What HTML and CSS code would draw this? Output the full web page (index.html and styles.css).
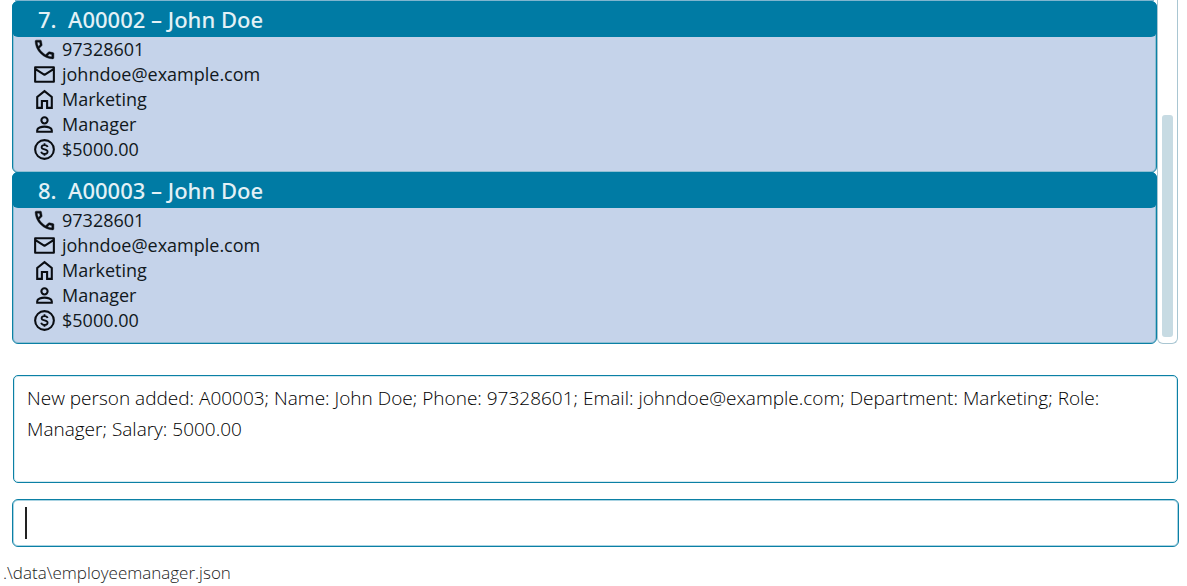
FILE: index.html
```html
<!DOCTYPE html>
<html lang="en">
<head>
<meta charset="utf-8">
<title>Employee Manager</title>
<link rel="stylesheet" href="styles.css">
</head>
<body>
<svg class="sprite" aria-hidden="true">
  <symbol id="i-phone" viewBox="0 0 24 24"><path d="M19.950 21q-3.125 0-6.175-1.362t-5.550-3.863-3.862-5.550T3 4.050q0-.45.3-.75t.75-.3H8.100q.35 0 .625.238t.325.562l.65 3.500q.05.4-.025.675T9.400 8.450L6.975 10.900q.5.925 1.187 1.787t1.513 1.663q.775.775 1.625 1.438T13.100 17l2.350-2.350q.225-.225.588-.337t.712-.063l3.450.7q.35.1.575.363T21 15.900v4.050q0 .45-.3.75t-.75.300M6.025 9l1.650-1.650L7.250 5H5.025q.125 1.025.35 2.025T6.025 9m8.950 8.950q.975.425 1.988.675T19 18.950v-2.200l-2.350-.475z" fill="currentColor" stroke="currentColor" stroke-width=".4"/></symbol>
  <symbol id="i-mail" viewBox="0 0 24 24"><path d="M3 5h18v14H3zM3 6.500l9 5.800 9-5.800" fill="none" stroke="currentColor" stroke-width="2" stroke-linejoin="round"/></symbol>
  <symbol id="i-home" viewBox="0 0 24 24"><path d="M5 20V9.500L12 4l7 5.500V20h-4.500v-6.500h-5V20z" fill="none" stroke="currentColor" stroke-width="2"/></symbol>
  <symbol id="i-person" viewBox="0 0 24 24"><circle cx="12" cy="8" r="3" fill="none" stroke="currentColor" stroke-width="2"/><path d="M5 19v-1.500c0-2.200 4-3.500 7-3.500s7 1.300 7 3.500V19z" fill="none" stroke="currentColor" stroke-width="2"/></symbol>
  <symbol id="i-money" viewBox="0 0 24 24"><circle cx="12" cy="12" r="9" fill="none" stroke="currentColor" stroke-width="2"/><path d="M15 9.600C14.700 8.300 13.500 7.700 12 7.700c-1.700 0-2.800.8-2.800 2.100 0 3 5.800 1.300 5.800 4.400 0 1.300-1.300 2.100-3 2.100-1.600 0-2.800-.7-3.200-2.100M12 6v2m0 8v2" fill="none" stroke="currentColor" stroke-width="1.700"/></symbol>
</svg>
<main class="app">
  <section class="list">
    <div class="cards">
      <div class="card card-tail"></div>
      <article class="card">
        <h2 class="card-title"><span class="index">7.</span>A00002 – John Doe</h2>
        <ul class="details">
          <li><svg class="icon"><use href="#i-phone"/></svg>97328601</li>
          <li><svg class="icon"><use href="#i-mail"/></svg>johndoe@example.com</li>
          <li><svg class="icon"><use href="#i-home"/></svg>Marketing</li>
          <li><svg class="icon"><use href="#i-person"/></svg>Manager</li>
          <li><svg class="icon"><use href="#i-money"/></svg>$5000.00</li>
        </ul>
      </article>
      <article class="card">
        <h2 class="card-title"><span class="index">8.</span>A00003 – John Doe</h2>
        <ul class="details">
          <li><svg class="icon"><use href="#i-phone"/></svg>97328601</li>
          <li><svg class="icon"><use href="#i-mail"/></svg>johndoe@example.com</li>
          <li><svg class="icon"><use href="#i-home"/></svg>Marketing</li>
          <li><svg class="icon"><use href="#i-person"/></svg>Manager</li>
          <li><svg class="icon"><use href="#i-money"/></svg>$5000.00</li>
        </ul>
      </article>
    </div>
    <div class="scroll-track"><div class="scroll-thumb"></div></div>
  </section>
  <output class="result">New person added: A00003; Name: John Doe; Phone: 97328601; Email: johndoe@example.com; Department: Marketing; Role: Manager; Salary: 5000.00</output>
  <div class="command">
    <input class="command-input" type="text" aria-label="Command">
    <span class="caret"></span>
  </div>
</main>
<footer class="status">.\data\employeemanager.json</footer>
</body>
</html>
```
FILE: styles.css
```css
* {
  box-sizing: border-box;
}

body {
  margin: 0;
  background: #fff;
  color: #111820;
  font-family: "Open Sans", "Noto Sans", sans-serif;
  font-size: 18px;
}

.sprite {
  display: none;
}

.app {
  padding: 0 8px 0 12px;
}

.list {
  display: flex;
  margin-right: 1px;
}

.cards {
  flex: 1;
}

.card {
  border: 1px solid #0b80a5;
  border-radius: 6px;
  background: #c5d3ea;
  box-shadow: inset 0 0 0 1px #8fbfd3;
  padding-bottom: 10px;
}

.card + .card + .card {
  margin-top: -1px;
}

.card-tail {
  height: 1px;
  padding: 0;
  border-width: 0 0 1px;
  border-color: #7fb5cf;
  border-radius: 0;
  box-shadow: none;
  margin: 0 3px;
}

.card-title {
  display: flex;
  margin: -1px -1px 0;
  padding-left: 26px;
  border-radius: 6px;
  background: #007ba4;
  color: #e3f1f6;
  font-size: 22px;
  font-weight: 500;
  line-height: 36px;
  font-family: "Noto Sans", "Open Sans", sans-serif;
}

.index {
  width: 30px;
}

.details {
  margin: 0;
  padding: 0 0 0 19px;
  list-style: none;
}

.details li {
  display: flex;
  gap: 5px;
  height: 25px;
  line-height: 24px;
}

.icon {
  width: 25px;
  height: 25px;
  color: #0a0d12;
}

.scroll-track {
  display: flex;
  align-items: flex-end;
  width: 21px;
  padding: 0 4px 6px;
  border: 1px solid #a9c6d2;
  border-top: 0;
  border-radius: 0 0 6px 6px;
}

.scroll-thumb {
  flex: 1;
  height: 66%;
  border-radius: 3px;
  background: #c7dbe3;
}

.result {
  display: block;
  min-height: 108px;
  margin: 31px 1px 16px;
  padding: 7px 13px;
  border: 1px solid #0b80a5;
  border-radius: 5px;
  box-shadow: inset 0 0 0 1px #d3e9f0;
  color: #000;
  font-size: 19px;
  font-weight: 300;
  line-height: 31px;
}

.command {
  position: relative;
}

.command-input {
  display: block;
  width: 100%;
  height: 48px;
  padding: 0 13px;
  border: 1px solid #0b80a5;
  border-radius: 6px;
  box-shadow: inset 0 0 0 1px #a9d3e2;
  background: #fff;
  font: inherit;
  outline: none;
}

.caret {
  position: absolute;
  top: 8px;
  left: 13px;
  width: 2px;
  height: 32px;
  background: #222;
}

.status {
  padding: 14px 3px 0;
  color: #222;
  font-size: 17px;
  font-weight: 300;
  line-height: 24px;
}
```
